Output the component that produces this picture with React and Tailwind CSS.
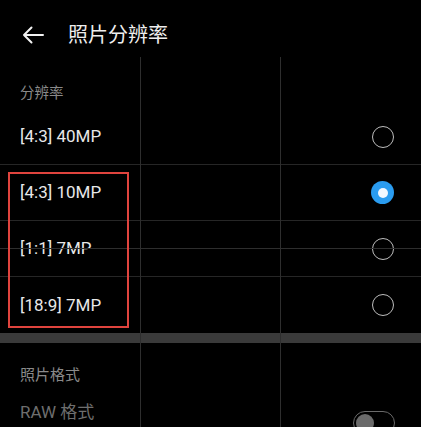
import React from 'react';

const font = { fontFamily: "Roboto, 'Noto Sans CJK SC', sans-serif" };

const options = [
  { label: '[4:3] 40MP', checked: false },
  { label: '[4:3] 10MP', checked: true },
  { label: '[1:1] 7MP', checked: false },
  { label: '[18:9] 7MP', checked: false },
];

const Radio = ({ checked }) =>
  checked ? (
    <span className="flex h-[23px] w-[23px] items-center justify-center rounded-full bg-[#2a9cf0]">
      <span className="h-[10px] w-[10px] rounded-full bg-[#f2f8ff]" />
    </span>
  ) : (
    <span className="h-[22px] w-[22px] rounded-full border-[1.5px] border-[#bdbdbd]" />
  );

const App = () => {
  return (
    <div className="relative h-[427px] w-[421px] overflow-hidden bg-black" style={font}>
      {/* Header */}
      <div className="flex h-[70px] items-center pl-[22px]">
        <svg width="22" height="18" viewBox="0 0 22 18" fill="none" stroke="#f2f2f2" strokeWidth="2" strokeLinecap="round" strokeLinejoin="round">
          <path d="M21 9H2M9.5 1.5L2 9l7.5 7.5" />
        </svg>
        <h1 className="ml-[24px] text-[20px] leading-none text-[#eeeeee]">照片分辨率</h1>
      </div>

      <div className="h-[39px] pl-[20px] pt-[17px] text-[14.5px] leading-none text-[#8a8a8a]">分辨率</div>

      <div>
        {options.map((opt, i) => (
          <div
            key={opt.label}
            className={`flex h-[56px] items-center justify-between pl-[20px] pr-[27px] ${i < options.length - 1 ? 'border-b border-[#262626]' : ''}`}
          >
            <span className="pt-px text-[17px] text-[#e8e8e8]">{opt.label}</span>
            <Radio checked={opt.checked} />
          </div>
        ))}
      </div>

      <div className="h-[10px] bg-[#3a3a3a]" />

      <div className="pl-[20px] pt-[25px] text-[15px] leading-none text-[#8a8a8a]">照片格式</div>
      <div className="mt-[21px] flex items-start justify-between pl-[20px] pr-[26px]">
        <span className="text-[17px] leading-none text-[#6e6e6e]">RAW 格式</span>
        <span className="mt-[7px] flex h-[24px] w-[42px] items-center rounded-full border-[1.5px] border-[#6a6a6a] px-[2px]">
          <span className="h-[18px] w-[18px] rounded-full bg-[#6a6a6a]" />
        </span>
      </div>

      {/* camera grid overlay */}
      <div className="pointer-events-none absolute left-[140px] top-[57px] h-[370px] w-px bg-[#2e2e2e]" />
      <div className="pointer-events-none absolute left-[280px] top-[57px] h-[370px] w-px bg-[#2e2e2e]" />
      <div className="pointer-events-none absolute left-0 top-[248px] h-px w-[421px] bg-[#2e2e2e]" />

      {/* red highlight box */}
      <div className="pointer-events-none absolute left-[8px] top-[172px] h-[156px] w-[121px] border-2 border-[#e0443e]" />
    </div>
  );
};

export default App;
